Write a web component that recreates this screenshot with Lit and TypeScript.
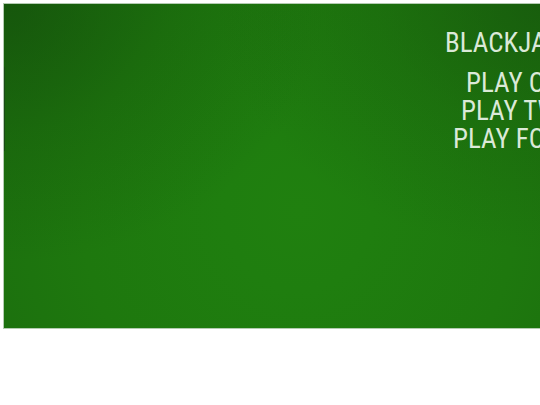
import { LitElement, html, css } from "lit";
import { customElement } from "lit/decorators.js";

@customElement("app-root")
export class AppRoot extends LitElement {
  static styles = css`
    :host {
      display: block;
      min-height: 100vh;
      overflow: hidden;
      background: #fff;
      font-family: "Roboto Condensed", "Liberation Sans Narrow", "Arial Narrow", sans-serif;
    }
    .table {
      box-sizing: border-box;
      position: relative;
      display: flex;
      justify-content: flex-end;
      min-height: 326px;
      margin: 3px 0 0 3px;
      padding-top: 25px;
      border: 1px solid #b4ccb2;
      border-right: 0;
      background:
        radial-gradient(ellipse 60% 80% at 0% 0%, rgba(16, 62, 10, 0.5), rgba(16, 62, 10, 0.2) 50%, transparent),
        radial-gradient(ellipse 60% 76% at 100% 0%, rgba(20, 74, 12, 0.5), rgba(20, 74, 12, 0.2) 50%, transparent),
        radial-gradient(ellipse 62% 110% at 55% 64%, #20800f 0%, #1f7e0f 22%, #1e780e 65%, #1c700e 100%);
    }
    .edge {
      position: absolute;
      left: 0;
      top: 63px;
      width: 1px;
      height: 84px;
      background: #1b4a18;
    }
    .menu {
      display: flex;
      flex-direction: column;
      width: 95px;
      white-space: nowrap;
      color: #dbe9d8;
      font-size: 27px;
      line-height: 28px;
    }
    .title {
      margin: 0 0 12px;
      font: inherit;
    }
    .choices {
      display: flex;
      flex-direction: column;
      align-items: flex-start;
    }
    .choice {
      padding: 0;
      border: 0;
      background: none;
      color: inherit;
      font: inherit;
      cursor: pointer;
    }
    .one { margin-left: 21px; }
    .two { margin-left: 16px; }
    .four { margin-left: 8px; }
  `;

  render() {
    return html`
      <main class="table">
        <span class="edge"></span>
        <section class="menu">
          <h1 class="title">BLACKJA</h1>
          <div class="choices">
            <button class="choice one">PLAY O</button>
            <button class="choice two">PLAY TW</button>
            <button class="choice four">PLAY FO</button>
          </div>
        </section>
      </main>
    `;
  }
}
